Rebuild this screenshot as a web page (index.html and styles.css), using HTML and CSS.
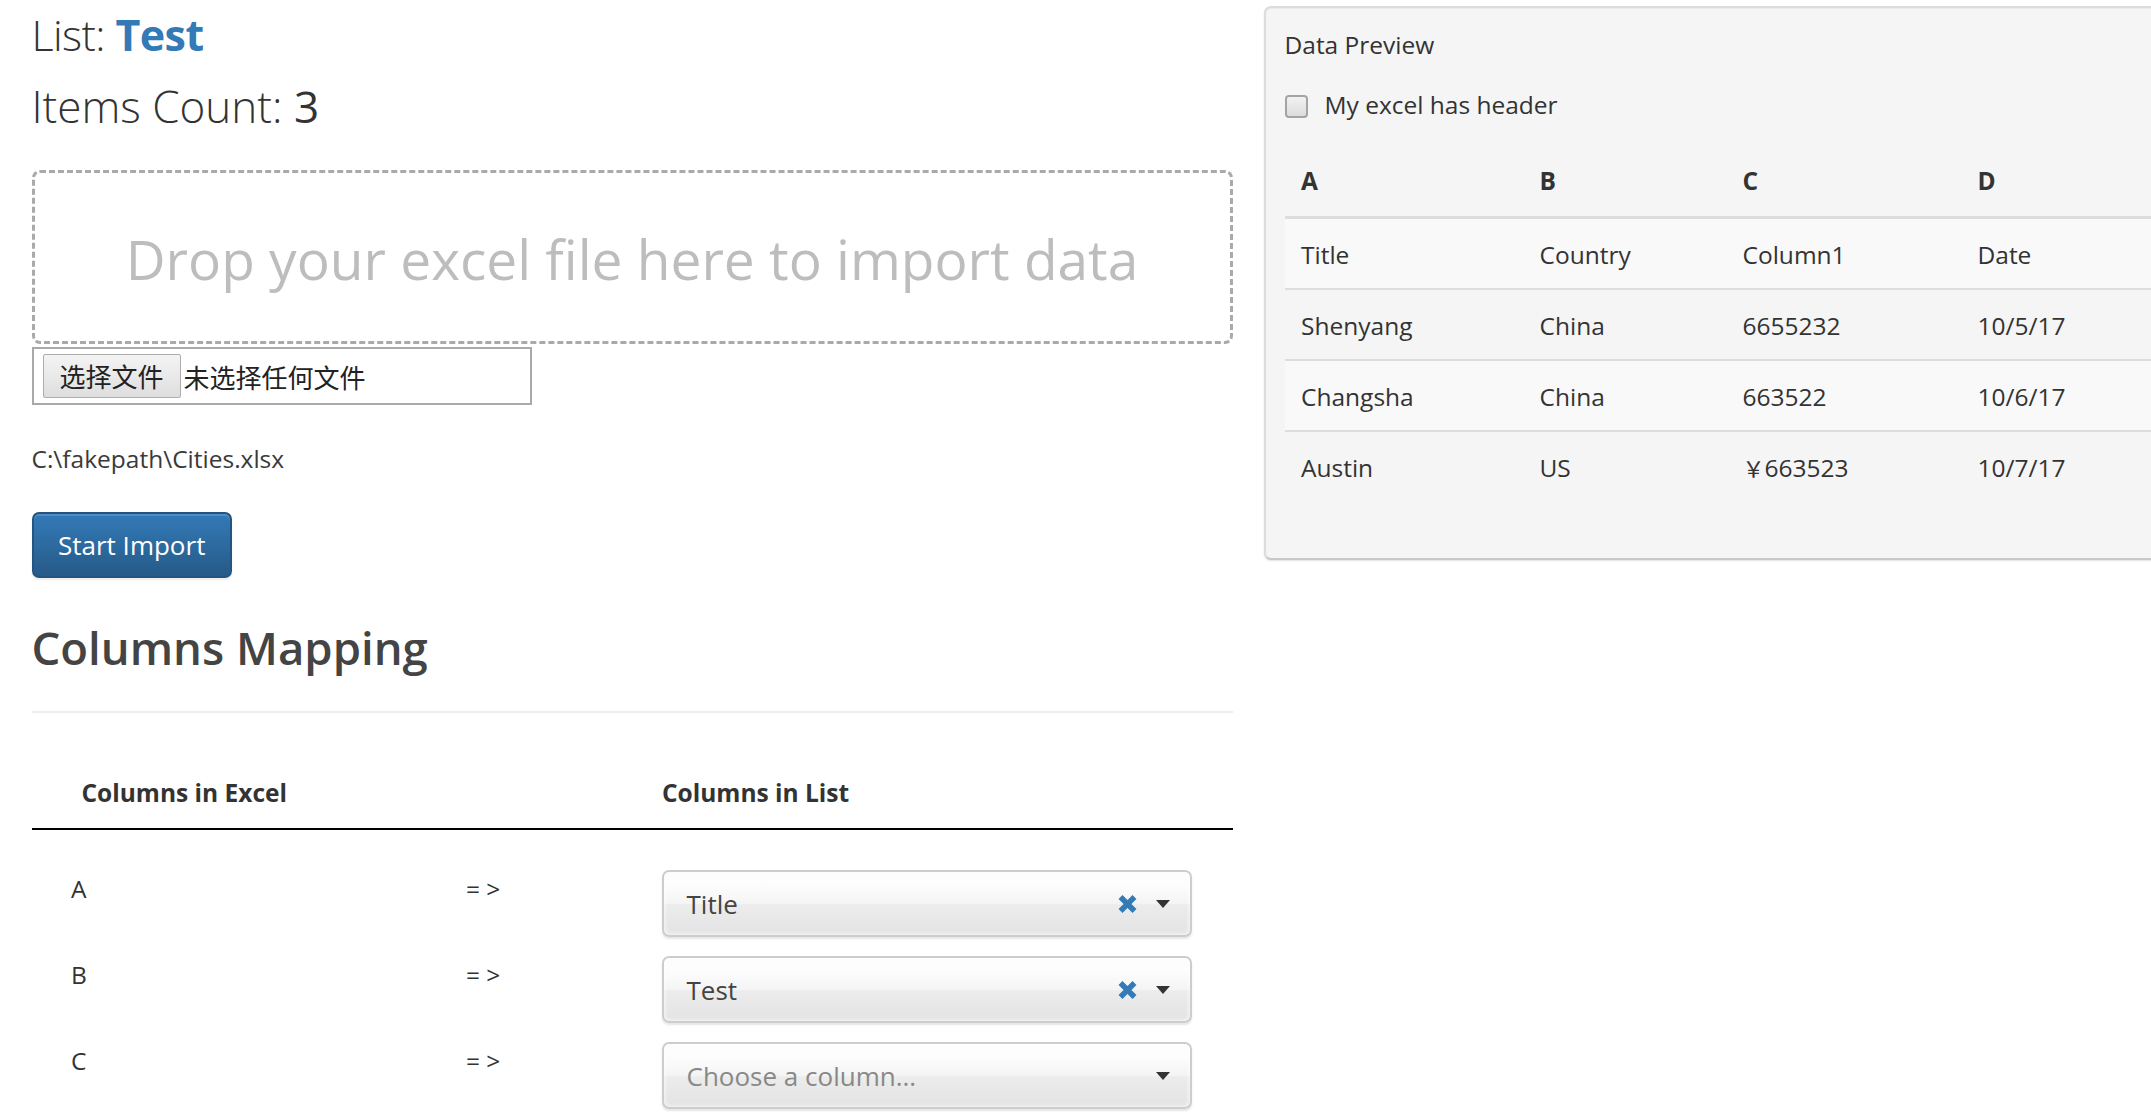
FILE: index.html
```html
<!DOCTYPE html>
<html>
<head>
<meta charset="utf-8">
<title>Import</title>
<link rel="stylesheet" href="styles.css">
</head>
<body>
<div class="page">
  <div class="left">
    <h1 class="big-title list">List: <span class="list-name">Test</span></h1>
    <h1 class="big-title count">Items Count: <span class="count-num">3</span></h1>
    <div class="dropzone">Drop your excel file here to import data</div>
    <div class="file-input"><span class="file-btn">选择文件</span><span class="file-none">未选择任何文件</span></div>
    <p class="path">C:\fakepath\Cities.xlsx</p>
    <button class="btn-primary">Start Import</button>
    <h2 class="mapping-title">Columns Mapping</h2>
    <hr class="divider">
    <div class="map-head">
      <div class="mh-excel">Columns in Excel</div>
      <div class="mh-arrow"></div>
      <div class="mh-list">Columns in List</div>
    </div>
    <div class="map-rows">
      <div class="map-row">
        <div class="mr-label">A</div>
        <div class="mr-arrow">= &gt;</div>
        <div class="mr-select">
          <div class="chosen">
            <span class="chosen-text">Title</span>
            <svg class="chosen-x" width="21" height="20" viewBox="0 0 21 20"><path d="M3.5 3 L17.5 17 M17.5 3 L3.5 17" stroke="#337ab7" stroke-width="5.5" stroke-linecap="butt"/></svg>
            <span class="caret"></span>
          </div>
        </div>
      </div>
      <div class="map-row">
        <div class="mr-label">B</div>
        <div class="mr-arrow">= &gt;</div>
        <div class="mr-select">
          <div class="chosen">
            <span class="chosen-text">Test</span>
            <svg class="chosen-x" width="21" height="20" viewBox="0 0 21 20"><path d="M3.5 3 L17.5 17 M17.5 3 L3.5 17" stroke="#337ab7" stroke-width="5.5" stroke-linecap="butt"/></svg>
            <span class="caret"></span>
          </div>
        </div>
      </div>
      <div class="map-row">
        <div class="mr-label">C</div>
        <div class="mr-arrow">= &gt;</div>
        <div class="mr-select">
          <div class="chosen">
            <span class="chosen-text placeholder">Choose a column...</span>
            <span class="caret"></span>
          </div>
        </div>
      </div>
    </div>
  </div>
  <div class="well">
    <div class="well-title">Data Preview</div>
    <div class="check-row"><span class="checkbox"></span><span class="check-label">My excel has header</span></div>
    <table class="preview">
      <colgroup><col class="c1"><col class="c2"><col class="c3"><col class="c4"></colgroup>
      <thead>
        <tr><th>A</th><th>B</th><th>C</th><th>D</th></tr>
      </thead>
      <tbody>
        <tr class="odd"><td>Title</td><td>Country</td><td>Column1</td><td>Date</td></tr>
        <tr><td>Shenyang</td><td>China</td><td>6655232</td><td>10/5/17</td></tr>
        <tr class="odd"><td>Changsha</td><td>China</td><td>663522</td><td>10/6/17</td></tr>
        <tr><td>Austin</td><td>US</td><td><span class="yen">￥</span>663523</td><td>10/7/17</td></tr>
      </tbody>
    </table>
  </div>
</div>
</body>
</html>
```

FILE: styles.css
```css
* { box-sizing: border-box; }
html, body { margin: 0; padding: 0; background: #fff; }
body {
  width: 2151px;
  height: 1117px;
  overflow: hidden;
  font-family: "Open Sans", "Noto Sans CJK SC", sans-serif;
  font-size: 24.5px;
  line-height: 35px;
  color: #333;
}
.page {
  display: flex;
  align-items: flex-start;
  gap: 31px;
  padding-left: 31.5px;
}
.left { width: 1201px; flex: none; }

.big-title {
  margin: 5px 0 0;
  font-size: 44px;
  line-height: 60px;
  font-weight: 300;
  color: #333;
}
.big-title.list { font-size: 43px; letter-spacing: -0.6px; }
.big-title.count { margin-top: 11px; }
.list-name { color: #337ab7; font-weight: 700; }
.count-num { font-weight: 400; }

.dropzone {
  margin-top: 34px;
  height: 174px;
  border: 3px dashed #aaa;
  border-radius: 8px;
  padding-top: 48px;
  text-align: center;
  font-size: 55px;
  line-height: 75px;
  color: #bdbdbd;
}

.file-input {
  margin-top: 3px;
  width: 500px;
  height: 58px;
  border: 2px solid #a9a9a9;
  display: flex;
  align-items: center;
  padding-left: 9px;
  font-family: "Noto Sans CJK SC", sans-serif;
  font-size: 26px;
  color: #222;
}
.file-btn {
  height: 44px;
  line-height: 42px;
  padding: 0 16px;
  border: 1px solid #adadad;
  background: linear-gradient(#f4f4f4, #dedede);
  border-radius: 2px;
}
.file-none { margin-left: 3px; }

.path { margin: 36px 0 0; color: #3a3a3a; }

.btn-primary {
  display: block;
  margin-top: 36px;
  height: 66px;
  padding: 0 24.5px;
  font-family: "Open Sans", sans-serif;
  font-size: 26px;
  line-height: 62px;
  color: #fff;
  background: linear-gradient(#337ab7, #265a88);
  border: 2px solid #245580;
  border-radius: 7px;
  box-shadow: inset 0 2px 0 rgba(255,255,255,.15), 0 2px 2px rgba(0,0,0,.075);
}

.mapping-title {
  margin: 39px 0 0;
  font-size: 45.5px;
  line-height: 60px;
  font-weight: 600;
  color: #444;
}
.divider {
  margin: 34px 0 0;
  border: 0;
  border-top: 2px solid #eee;
  height: 0;
}

.map-head, .map-row {
  display: grid;
  grid-template-columns: 434.5px 196px 1fr;
}
.map-head {
  margin-top: 48px;
  padding: 14px 0 18px;
  border-bottom: 2px solid #000;
  font-weight: 700;
}
.mh-excel { padding-left: 50px; }
.map-rows { padding-top: 33px; }
.map-row { height: 86px; }
.mr-label { padding: 8px 0 0 39.5px; }
.mr-arrow { padding-top: 8px; }
.mr-select { padding-top: 7px; }

.chosen {
  width: 530px;
  height: 67px;
  border: 2px solid #cdcdcd;
  border-radius: 7px;
  background: linear-gradient(#fdfdfd 20%, #f4f4f4 50%, #ececec 52%, #e3e3e3 100%);
  box-shadow: inset 0 0 5px #fff, 0 2px 2px rgba(0,0,0,.1);
  display: flex;
  align-items: center;
  padding: 2px 20px 0 22.5px;
  font-size: 26px;
  color: #444;
}
.chosen-text { flex: 1; }
.placeholder { color: #888; }
.chosen-x { margin-right: 18px; margin-top: -2px; }
.caret {
  width: 0;
  height: 0;
  margin-top: -2px;
  border-left: 7px solid transparent;
  border-right: 7px solid transparent;
  border-top: 8px solid #333;
}

.well {
  flex: none;
  margin-top: 6px;
  width: 1000px;
  height: 554px;
  padding-left: 19px;
  background: #f5f5f5;
  border: 2px solid #dcdcdc;
  border-bottom-color: #c8c8c8;
  border-radius: 7px;
  box-shadow: inset 0 1px 1px rgba(0,0,0,.05), 0 1px 2px rgba(0,0,0,.12);
}
.well-title { margin-top: 19px; }
.check-row {
  margin-top: 25px;
  height: 35px;
  display: flex;
  align-items: center;
}
.checkbox {
  width: 23px;
  height: 23px;
  margin-top: 4px;
  border: 2px solid #a4a4a4;
  border-radius: 4px;
  background: linear-gradient(#f2f2f2, #dcdcdc);
}
.check-label { margin-left: 17px; }

.preview {
  margin-top: 23px;
  border-collapse: collapse;
  width: 962px;
}
.preview col.c1 { width: 238.5px; }
.preview col.c2 { width: 203px; }
.preview col.c3 { width: 235px; }
.preview th, .preview td {
  text-align: left;
  padding: 18px 16.5px 16px;
  line-height: 35px;
  font-weight: 400;
}
.preview th {
  font-weight: 700;
  padding: 18px 16.5px 18px;
  border-bottom: 3px solid #ddd;
}
.preview tbody tr + tr td { border-top: 2px solid #ddd; }
.preview tr.odd td { background: #f9f9f9; }
.yen { font-family: "Noto Sans CJK SC", sans-serif; font-size: 22px; }
```
